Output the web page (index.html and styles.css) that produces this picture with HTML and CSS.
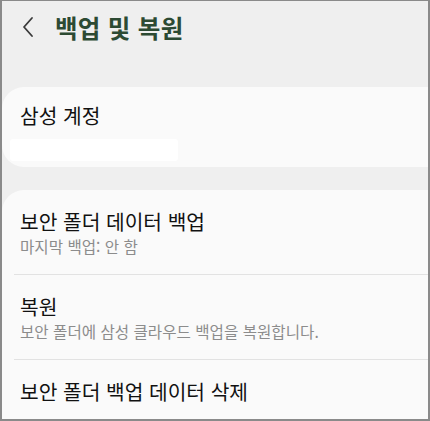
FILE: index.html
```html
<!DOCTYPE html>
<html lang="ko">

<head>
    <meta name="viewport" content="width=device-width, initial-scale=1.0">
    <link rel="stylesheet" href="styles.css">
</head>

<body>
    <div class="screen">
        <div class="header">
            <svg class="back" width="14" height="22" viewBox="0 0 14 22">
                <path d="M11 2 L3 11 L11 20" fill="none" stroke="#3a3a3a" stroke-width="1.8" stroke-linecap="round" stroke-linejoin="round" />
            </svg>
            <h1 class="title">백업 및 복원</h1>
        </div>

        <div class="card account">
            <p class="item-title">삼성 계정</p>
            <div class="hidden-bar"></div>
        </div>

        <div class="card list">
            <div class="item">
                <p class="item-title">보안 폴더 데이터 백업</p>
                <p class="item-sub">마지막 백업: 안 함</p>
            </div>
            <div class="item">
                <p class="item-title">복원</p>
                <p class="item-sub">보안 폴더에 삼성 클라우드 백업을 복원합니다.</p>
            </div>
            <div class="item">
                <p class="item-title">보안 폴더 백업 데이터 삭제</p>
            </div>
        </div>
    </div>
</body>

</html>
```

FILE: styles.css
```css
* {
    box-sizing: border-box;
}

body {
    margin: 0;
    font-family: "Noto Sans CJK KR", "Noto Sans", sans-serif;
}

p {
    margin: 0;
}

.screen {
    width: 430px;
    height: 421px;
    overflow: hidden;
    background-color: #efefef;
    border-top: 1px solid #8a8a8a;
    border-left: 2px solid #8a8a8a;
    border-right: 2px solid #8a8a8a;
    border-bottom: 2px solid #8a8a8a;
}

.header {
    display: flex;
    align-items: center;
    height: 52px;
    padding-left: 19px;
}

.back {
    margin-right: 20px;
}

.title {
    margin: 0;
    font-size: 24.5px;
    font-weight: bold;
    color: #2c4a33;
    letter-spacing: 0.3px;
}

.card {
    background-color: #fafafa;
    border-radius: 22px;
    margin-right: -30px;
    margin-bottom: 23px;
}

.account {
    margin-top: 34px;
    height: 80px;
    padding: 14px 0 0 18px;
}

.hidden-bar {
    width: 168px;
    height: 22px;
    margin-top: 10px;
    margin-left: -10px;
    background-color: #ffffff;
    border-radius: 3px;
}

.list {
    padding-bottom: 40px;
}

.item-title {
    font-size: 20.3px;
    color: #111111;
    line-height: 28px;
}

.item-sub {
    font-size: 15.6px;
    color: #8c8c8c;
    line-height: 22px;
}

.item {
    padding: 17px 0 17px 6px;
    margin-left: 12px;
    border-bottom: 1px solid #e2e2e2;
}

.item:last-child {
    border-bottom: none;
}
```
